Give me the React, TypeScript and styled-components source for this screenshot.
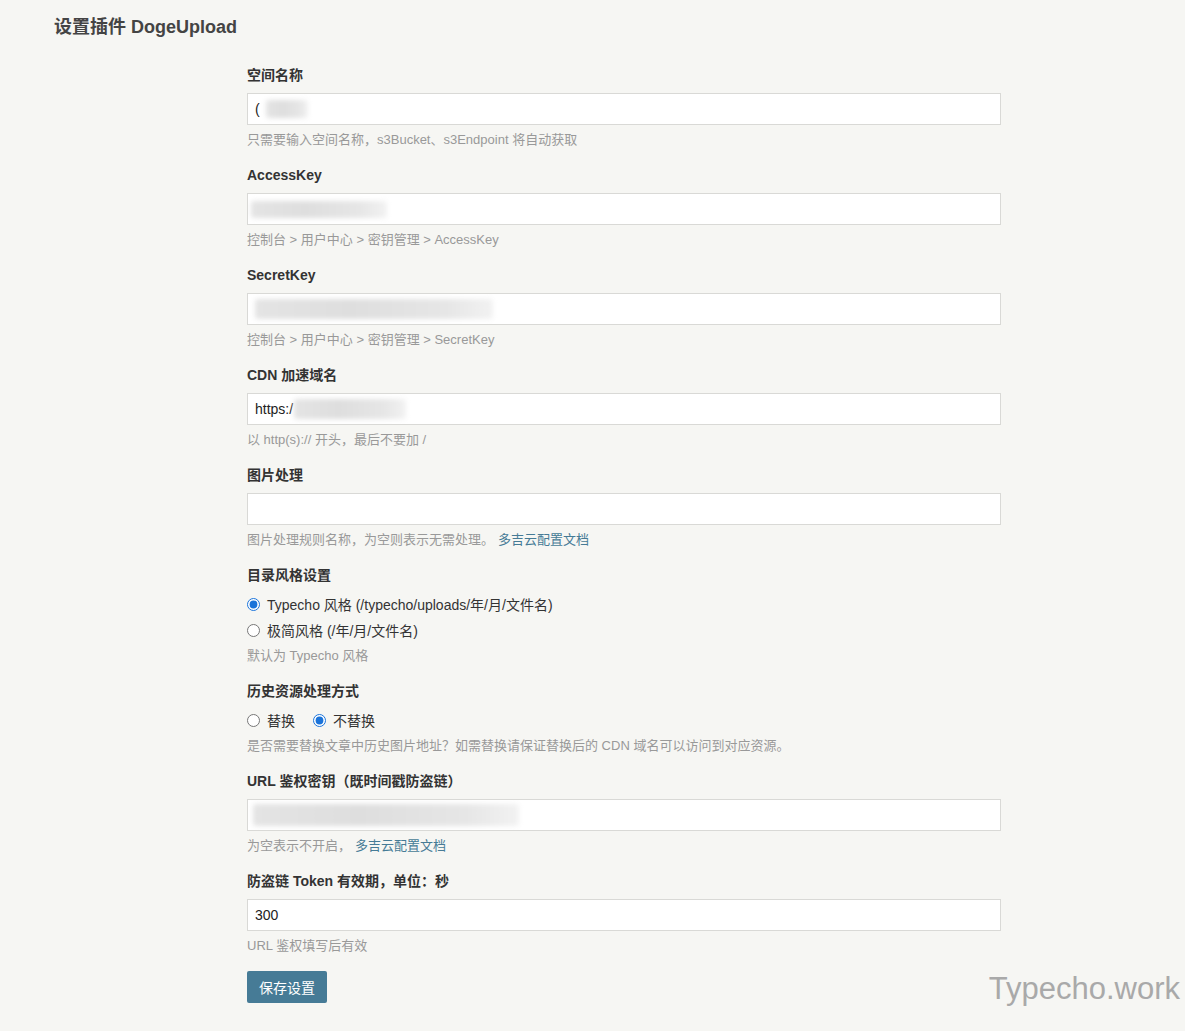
import styled, { createGlobalStyle } from "styled-components";

const GlobalStyle = createGlobalStyle`
  html, body {
    margin: 0;
    padding: 0;
    background: #f6f6f3;
  }
  body {
    font-family: "Liberation Sans", Arial, "Noto Sans CJK SC", sans-serif;
    font-size: 14px;
    color: #444;
  }
`;

const Page = styled.div`
  position: relative;
  min-height: 1031px;
  padding: 0 54px;
  box-sizing: border-box;
`;

const PageTitle = styled.h2`
  margin: 0;
  padding-top: 14px;
  font-size: 18px;
  line-height: 27px;
  font-weight: bold;
  color: #444;
`;

const Form = styled.form`
  width: 754px;
  margin: 24px 0 0 193px;
  display: flex;
  flex-direction: column;
  gap: 16px;
`;

const Option = styled.div`
  display: flex;
  flex-direction: column;
`;

const Label = styled.label`
  display: block;
  font-size: 14px;
  line-height: 21px;
  font-weight: bold;
  color: #333;
  margin-bottom: 7px;
`;

const Field = styled.div`
  height: 32px;
  box-sizing: border-box;
  border: 1px solid #d9d9d6;
  background: #fff;
  display: flex;
  align-items: center;
  padding: 0 7px;
  font-size: 14px;
  color: #222;
  overflow: hidden;
`;

const Blur = styled.span<{ $w: number; $h?: number; $shift?: number }>`
  display: inline-block;
  width: ${p => p.$w}px;
  height: ${p => p.$h ?? 16}px;
  margin-left: ${p => p.$shift ?? 0}px;
  background: linear-gradient(90deg, #e4e4e4, #dedede 40%, #e6e6e6 80%, #f2f2f2);
  filter: blur(2.5px);
  border-radius: 3px;
`;

const Description = styled.p<{ $top?: number }>`
  margin: ${p => p.$top ?? 5}px 0 0;
  font-size: 13px;
  line-height: 19px;
  color: #999;
`;

const DocLink = styled.a`
  color: #467b96;
  text-decoration: none;
  margin-left: 4px;
`;

const RadioList = styled.div<{ $inline?: boolean }>`
  display: flex;
  flex-direction: ${p => (p.$inline ? "row" : "column")};
  gap: ${p => (p.$inline ? "18px" : "0")};
  margin-top: -2px;
`;

const RadioItem = styled.label`
  height: 26px;
  display: flex;
  align-items: center;
  gap: 7px;
  font-size: 14px;
  color: #333;
`;

const Radio = styled.input.attrs({ type: "radio" })`
  margin: 0;
  width: 13px;
  height: 13px;
  accent-color: #1a73d9;
`;

const SubmitButton = styled.button`
  align-self: flex-start;
  width: 80px;
  height: 32px;
  border: none;
  border-radius: 2px;
  background: #467b96;
  color: #fff;
  font-family: inherit;
  font-size: 14px;
  cursor: pointer;
`;

const Watermark = styled.div`
  position: absolute;
  right: 5px;
  top: 970px;
  font-size: 31px;
  line-height: 38px;
  color: #a9a9a9;
`;

const App = () => {
  return (
    <>
      <GlobalStyle />
      <Page>
        <PageTitle>设置插件 DogeUpload</PageTitle>
        <Form onSubmit={e => e.preventDefault()}>
          <Option>
            <Label>空间名称</Label>
            <Field>
              <span>(</span>
              <Blur $w={42} $h={18} $shift={6} />
            </Field>
            <Description>只需要输入空间名称，s3Bucket、s3Endpoint 将自动获取</Description>
          </Option>

          <Option>
            <Label>AccessKey</Label>
            <Field>
              <Blur $w={136} $h={17} $shift={-4} />
            </Field>
            <Description>控制台 &gt; 用户中心 &gt; 密钥管理 &gt; AccessKey</Description>
          </Option>

          <Option>
            <Label>SecretKey</Label>
            <Field>
              <Blur $w={238} $h={20} />
            </Field>
            <Description>控制台 &gt; 用户中心 &gt; 密钥管理 &gt; SecretKey</Description>
          </Option>

          <Option>
            <Label>CDN 加速域名</Label>
            <Field>
              <span>https:/</span>
              <Blur $w={112} $h={20} $shift={1} />
            </Field>
            <Description>以 http(s):// 开头，最后不要加 /</Description>
          </Option>

          <Option>
            <Label>图片处理</Label>
            <Field />
            <Description>
              图片处理规则名称，为空则表示无需处理。
              <DocLink href="#">多吉云配置文档</DocLink>
            </Description>
          </Option>

          <Option>
            <Label>目录风格设置</Label>
            <RadioList>
              <RadioItem>
                <Radio name="style" defaultChecked />
                Typecho 风格 (/typecho/uploads/年/月/文件名)
              </RadioItem>
              <RadioItem>
                <Radio name="style" />
                极简风格 (/年/月/文件名)
              </RadioItem>
            </RadioList>
            <Description $top={3}>默认为 Typecho 风格</Description>
          </Option>

          <Option>
            <Label>历史资源处理方式</Label>
            <RadioList $inline>
              <RadioItem>
                <Radio name="history" />
                替换
              </RadioItem>
              <RadioItem>
                <Radio name="history" defaultChecked />
                不替换
              </RadioItem>
            </RadioList>
            <Description $top={3}>
              是否需要替换文章中历史图片地址？如需替换请保证替换后的 CDN 域名可以访问到对应资源。
            </Description>
          </Option>

          <Option>
            <Label>URL 鉴权密钥（既时间戳防盗链）</Label>
            <Field>
              <Blur $w={266} $h={22} $shift={-2} />
            </Field>
            <Description>
              为空表示不开启，
              <DocLink href="#">多吉云配置文档</DocLink>
            </Description>
          </Option>

          <Option>
            <Label>防盗链 Token 有效期，单位：秒</Label>
            <Field>300</Field>
            <Description>URL 鉴权填写后有效</Description>
          </Option>

          <SubmitButton type="submit">保存设置</SubmitButton>
        </Form>
        <Watermark>Typecho.work</Watermark>
      </Page>
    </>
  );
};

export default App;
